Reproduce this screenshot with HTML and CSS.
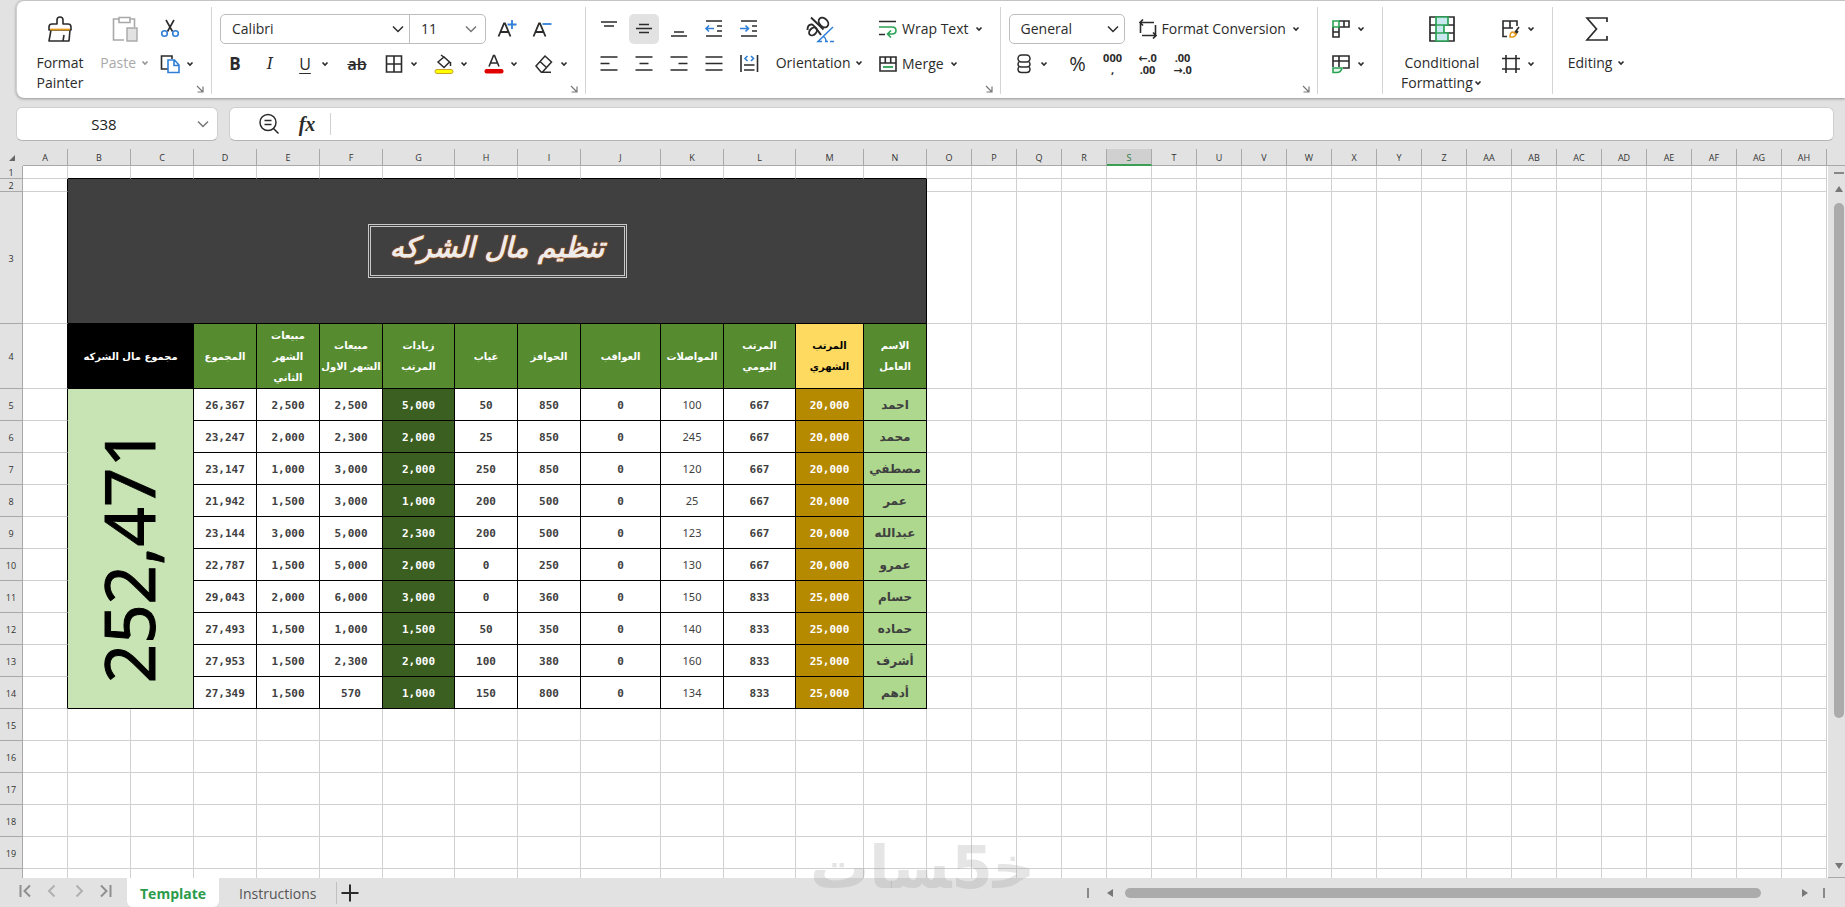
FILE: index.html
```html
<!DOCTYPE html>
<html lang="en">
<head>
    <meta charset="UTF-8">
    <meta name="viewport" content="width=device-width, initial-scale=1.0">
    <title>Template</title>
    <link rel="stylesheet" href="styles.css">
</head>
<body>

    <!-- shared icons -->
    <svg class="defs" aria-hidden="true">
        <symbol id="caret" viewBox="0 0 8 6"><path d="M1.500 1.500 4 4 6.500 1.500" fill="none" stroke="#2b2b2b" stroke-width="1.600"/></symbol>
        <symbol id="chevron" viewBox="0 0 12 8"><path d="M1 1.500 6 6.500 11 1.500" fill="none" stroke="currentColor" stroke-width="1.500"/></symbol>
        <symbol id="corner" viewBox="0 0 8 8"><path d="M1 1 6.500 6.500M7 1.500V7H1.500" fill="none" stroke="#777" stroke-width="1.200"/></symbol>
    </svg>

    <header class="ribbon">
        <div class="group">
            <div class="tools">
                <button class="big painter">
                    <svg width="28" height="28" viewBox="0 0 28 28"><path d="M11 9V5a3 3 0 0 1 6 0v4h5a3 3 0 0 1 3 3v3H3v-3a3 3 0 0 1 3-3zM5 15 3 26h20l1-11M18 20l-1 6" fill="none" stroke="#2b2b2b" stroke-width="1.600" stroke-linejoin="round"/><path d="M4 14.500h20" stroke="#e39a1c" stroke-width="1.800"/></svg>
                    <span>Format<br>Painter</span>
                </button>
                <button class="big paste" disabled>
                    <svg width="28" height="28" viewBox="0 0 28 28"><path d="M8 4H2.500v21H13M19 4h4.500v8M8 2.500h11v5H8z" fill="none" stroke="#a9a9a9" stroke-width="1.600"/><path d="M16 13h10v13H16z" fill="#e2e2e2" stroke="#a9a9a9" stroke-width="1.400"/></svg>
                    <span>Paste <svg class="caret"><use href="#caret"/></svg></span>
                </button>
                <div class="stack">
                    <div class="row">
                        <button class="icon" aria-label="Cut"><svg width="20" height="20" viewBox="0 0 20 20"><path d="M6 1 12.500 12.500M14 1 7.500 12.500" fill="none" stroke="#2b2b2b" stroke-width="1.600"/><g fill="none" stroke="#2f7fd8" stroke-width="1.600"><circle cx="4.500" cy="14.500" r="2.800"/><circle cx="15.500" cy="14.500" r="2.800"/></g></svg></button>
                    </div>
                    <div class="row">
                        <button class="split" aria-label="Copy"><span class="icon"><svg width="20" height="20" viewBox="0 0 20 20"><path d="M8 15H1.500V2H12v3" fill="none" stroke="#2b2b2b" stroke-width="1.600"/><path d="M8 6h6.500L19 11v7.500H8zM14 6v5.500h5" fill="#fff" stroke="#2f7fd8" stroke-width="1.600"/></svg></span><svg class="caret"><use href="#caret"/></svg></button>
                    </div>
                </div>
            </div>
            <button class="launcher" aria-label="Clipboard settings"><svg><use href="#corner"/></svg></button>
        </div>

        <div class="group">
            <div class="tools">
                <div class="stack">
                    <div class="row">
                        <div class="combo">
                            <label class="pick font-name"><select aria-label="Font"><option>Calibri</option></select><svg><use href="#chevron"/></svg></label>
                            <label class="pick font-size"><select aria-label="Font size"><option>11</option></select><svg><use href="#chevron"/></svg></label>
                        </div>
                        <button class="icon" aria-label="Increase font size"><svg width="20" height="20" viewBox="0 0 20 20"><path d="M1.500 17.500 7 4.500h1L13.500 17.500M3.500 13h8" fill="none" stroke="#2b2b2b" stroke-width="1.800"/><path d="M15 1v9M10.500 5.500h9" stroke="#2f7fd8" stroke-width="1.800"/></svg></button>
                        <button class="icon" aria-label="Decrease font size"><svg width="20" height="20" viewBox="0 0 20 20"><path d="M1.500 17.500 7 4.500h1L13.500 17.500M3.500 13h8" fill="none" stroke="#2b2b2b" stroke-width="1.800"/><path d="M10.500 5h9" stroke="#2f7fd8" stroke-width="1.800"/></svg></button>
                    </div>
                    <div class="row">
                        <button class="icon bold">B</button>
                        <button class="icon italic">I</button>
                        <button class="split"><span class="icon underline">U</span><svg class="caret"><use href="#caret"/></svg></button>
                        <button class="icon strike">ab</button>
                        <button class="split" aria-label="Borders"><span class="icon"><svg width="20" height="20" viewBox="0 0 20 20"><path d="M2.500 2h15v16h-15zM10 2v16M2.500 10h15" fill="none" stroke="#2b2b2b" stroke-width="1.600"/></svg></span><svg class="caret"><use href="#caret"/></svg></button>
                        <button class="split" aria-label="Fill color"><span class="icon"><svg width="20" height="20" viewBox="0 0 20 20"><path d="m4 8 6-5 5.500 5-5.500 5.500zM7 1l4 3M16.500 8v4" fill="none" stroke="#2b2b2b" stroke-width="1.500"/><rect x="1" y="15.500" width="18" height="4" rx="2" fill="#ff0" stroke="#c9a227"/></svg></span><svg class="caret"><use href="#caret"/></svg></button>
                        <button class="split" aria-label="Font color"><span class="icon"><svg width="20" height="20" viewBox="0 0 20 20"><path d="M5 12.500 9.500 1.500h1L15 12.500M6.500 9h7" fill="none" stroke="#2b2b2b" stroke-width="1.600"/><rect x="0.500" y="15" width="19" height="4.500" rx="2" fill="#e00000"/></svg></span><svg class="caret"><use href="#caret"/></svg></button>
                        <button class="split" aria-label="Clear"><span class="icon"><svg width="20" height="20" viewBox="0 0 20 20"><path d="m2 12 9-10 6.500 6-9 10H7zM6 7.500l6.500 6M7 18.300h10" fill="none" stroke="#2b2b2b" stroke-width="1.500"/></svg></span><svg class="caret"><use href="#caret"/></svg></button>
                    </div>
                </div>
            </div>
            <button class="launcher" aria-label="Font settings"><svg><use href="#corner"/></svg></button>
        </div>

        <div class="group">
            <div class="tools">
                <div class="stack">
                    <div class="row lines">
                        <button class="icon" aria-label="Top align"><svg width="20" height="20" viewBox="0 0 20 20"><path d="M2 3h16M5 7h10"/></svg></button>
                        <button class="icon active" aria-label="Middle align"><svg width="20" height="20" viewBox="0 0 20 20"><path d="M5 5.500h10M2 9.500h16M5 13.500h10"/></svg></button>
                        <button class="icon" aria-label="Bottom align"><svg width="20" height="20" viewBox="0 0 20 20"><path d="M5 13h10M2 17h16"/></svg></button>
                        <button class="icon" aria-label="Decrease indent"><svg width="20" height="20" viewBox="0 0 20 20"><path d="M2 2h16M13 7h5M13 12h5M2 17h16"/><path class="blue" d="M10 9.500H2M5 6.500l-3 3 3 3"/></svg></button>
                        <button class="icon" aria-label="Increase indent"><svg width="20" height="20" viewBox="0 0 20 20"><path d="M2 2h16M13 7h5M13 12h5M2 17h16"/><path class="blue" d="M1 9.500h8M6.500 6.500l3 3-3 3"/></svg></button>
                    </div>
                    <div class="row lines">
                        <button class="icon" aria-label="Align left"><svg width="20" height="20" viewBox="0 0 20 20"><path d="M1.500 3h17M1.500 9.500h9M1.500 16h17"/></svg></button>
                        <button class="icon" aria-label="Align center"><svg width="20" height="20" viewBox="0 0 20 20"><path d="M1.500 3h17M5.500 9.500h9M1.500 16h17"/></svg></button>
                        <button class="icon" aria-label="Align right"><svg width="20" height="20" viewBox="0 0 20 20"><path d="M1.500 3h17M9.500 9.500h9M1.500 16h17"/></svg></button>
                        <button class="icon" aria-label="Justify"><svg width="20" height="20" viewBox="0 0 20 20"><path d="M1.500 3h17M1.500 9.500h17M1.500 16h17"/></svg></button>
                        <button class="icon" aria-label="Distribute"><svg width="20" height="20" viewBox="0 0 20 20"><path d="M2 1v17M18.500 1v17M5 11h10.500M5 16h10.500"/><path class="blue" d="M8.500 2 6 4.500 8.500 7M12 2l2.500 2.500L12 7"/></svg></button>
                    </div>
                </div>
                <button class="big orientation">
                    <svg width="28" height="28" viewBox="0 0 28 28"><g fill="none" stroke="#2b2b2b" stroke-width="1.900"><ellipse cx="7" cy="16.500" rx="4.500" ry="3.200" transform="rotate(-45 7 16.500)"/><path d="M1.500 15q0-6 4.500-5.500 2 .5 9 10.500M5 2.500l12.500 12"/><ellipse cx="17.500" cy="7.500" rx="5.500" ry="4" transform="rotate(45 17.500 7.500)"/></g><path d="M27 12 12 26.500h4M17 21q3 2 3 5.500M19 26.500h3M24 26.500h4" fill="none" stroke="#2f7fd8" stroke-width="1.500"/></svg>
                    <span>Orientation <svg class="caret"><use href="#caret"/></svg></span>
                </button>
                <div class="stack">
                    <div class="row">
                        <button class="wide"><svg width="18" height="18" viewBox="0 0 18 18"><path d="M0 1.500h17M0 14.500h6" fill="none" stroke="#2b2b2b" stroke-width="1.600"/><path d="M0 7h13q4 0 4 3.500t-4 3.500H9M12 10.500 8.500 14l3.500 3.500" fill="none" stroke="#2aa355" stroke-width="1.600"/></svg>Wrap Text <svg class="caret"><use href="#caret"/></svg></button>
                    </div>
                    <div class="row">
                        <button class="wide"><svg width="18" height="18" viewBox="0 0 18 18"><path d="M1 2h16v14H1zM1 8h16M6.300 2v6M11.700 2v6" fill="none" stroke="#2b2b2b" stroke-width="1.600"/><path d="M4 12h10" stroke="#2aa355" stroke-width="1.800"/></svg>Merge <svg class="caret"><use href="#caret"/></svg></button>
                    </div>
                </div>
            </div>
            <button class="launcher" aria-label="Alignment settings"><svg><use href="#corner"/></svg></button>
        </div>

        <div class="group">
            <div class="tools">
                <div class="stack">
                    <div class="row">
                        <div class="combo">
                            <label class="pick number"><select aria-label="Number format"><option>General</option></select><svg><use href="#chevron"/></svg></label>
                        </div>
                        <button class="wide convert"><svg width="18" height="20" viewBox="0 0 18 20"><path d="M1.500 14V3.500H15M4 0.500 1 3.500l3 3M16.500 6v10.500H3M14 13.500l3 3-3 3" fill="none" stroke="#2b2b2b" stroke-width="1.600"/></svg>Format Conversion <svg class="caret"><use href="#caret"/></svg></button>
                    </div>
                    <div class="row">
                        <button class="split" aria-label="Currency"><span class="icon"><svg width="20" height="20" viewBox="0 0 20 20"><g fill="none" stroke="#2b2b2b" stroke-width="1.500"><rect x="4" y="1" width="12" height="7" rx="3.500"/><path d="M5.500 7.500Q4 8.500 4 10q0 3 3.500 3h5q3.500 0 3.500-3 0-1.500-1.500-2.500M5.500 12.500Q4 13.500 4 15q0 3.500 3.500 3.500h5Q16 18.500 16 15q0-1.500-1.500-2.500"/></g></svg></span><svg class="caret"><use href="#caret"/></svg></button>
                        <button class="icon percent">%</button>
                        <button class="icon digits">000<br>,</button>
                        <button class="icon digits">←.0<br>.00</button>
                        <button class="icon digits">.00<br>→.0</button>
                    </div>
                </div>
            </div>
            <button class="launcher" aria-label="Number settings"><svg><use href="#corner"/></svg></button>
        </div>

        <div class="group">
            <div class="tools">
                <div class="stack">
                    <div class="row">
                        <button class="split" aria-label="Rows and columns"><span class="icon"><svg width="20" height="20" viewBox="0 0 20 20"><path d="M8 2h10v6H8M13 2v6M2 8v10h6V8M2 13h6" fill="none" stroke="#2b2b2b" stroke-width="1.600"/><path d="M2 2h6v6H2z" fill="none" stroke="#2aa355" stroke-width="1.600"/></svg></span><svg class="caret"><use href="#caret"/></svg></button>
                    </div>
                    <div class="row">
                        <button class="split" aria-label="Worksheet"><span class="icon"><svg width="20" height="20" viewBox="0 0 20 20"><path d="M2 13V2h16v12h-6M2 7h16M8 2v11" fill="none" stroke="#2b2b2b" stroke-width="1.600"/><path d="M2 14h9q-1 4.500-5 4.500H2z" fill="#e3f6e9" stroke="#2aa355" stroke-width="1.600"/></svg></span><svg class="caret"><use href="#caret"/></svg></button>
                    </div>
                </div>
            </div>
        </div>

        <div class="group">
            <div class="tools">
                <button class="big conditional">
                    <svg width="28" height="28" viewBox="0 0 28 28"><path d="M2 2h24v24H2zM2 10h24M2 18h24" fill="none" stroke="#2b2b2b" stroke-width="1.700"/><path d="M8 2h12v8H8zM8 10h8v8H8zM8 18h12v8H8z" fill="#c9e8ef" stroke="#2aa355" stroke-width="1.700"/></svg>
                    <span>Conditional<br>Formatting<svg class="caret"><use href="#caret"/></svg></span>
                </button>
                <div class="stack">
                    <div class="row">
                        <button class="split" aria-label="Table style"><span class="icon"><svg width="20" height="20" viewBox="0 0 20 20"><path d="M6 17.500H2V2h14v5M2 9h10M9 2v7M18 8l-4.500 6M17 12l-2 3" fill="none" stroke="#2b2b2b" stroke-width="1.600"/><path d="M12 13q-3 0-3 5h3q3-1 3-3z" fill="#fff" stroke="#e39a1c" stroke-width="1.600"/></svg></span><svg class="caret"><use href="#caret"/></svg></button>
                    </div>
                    <div class="row">
                        <button class="split" aria-label="Cell format"><span class="icon"><svg width="20" height="20" viewBox="0 0 20 20"><path d="M1 4.500h18M1 15h18M5 1v18M15 1v18" fill="none" stroke="#2b2b2b" stroke-width="1.600"/></svg></span><svg class="caret"><use href="#caret"/></svg></button>
                    </div>
                </div>
            </div>
        </div>

        <div class="group">
            <div class="tools">
                <button class="big editing">
                    <svg width="28" height="28" viewBox="0 0 28 28"><path d="M24 7V3H4l9.500 11L4 25h20v-4" fill="none" stroke="#2b2b2b" stroke-width="1.700"/></svg>
                    <span>Editing <svg class="caret"><use href="#caret"/></svg></span>
                </button>
            </div>
        </div>
    </header>

    <div class="formula-bar">
        <div class="name-box">
            <input type="text" aria-label="Name box" value="S38">
            <svg><use href="#chevron"/></svg>
        </div>
        <div class="formula">
            <button class="icon" aria-label="Zoom formula"><svg width="22" height="22" viewBox="0 0 22 22"><path d="M15 15 20.500 20.500M6.500 7.500h7M6.500 11.500h7" stroke="#2b2b2b" stroke-width="1.500"/><circle cx="10" cy="9.500" r="8" fill="none" stroke="#2b2b2b" stroke-width="1.500"/></svg></button>
            <button class="icon fx">fx</button>
            <input type="text" aria-label="Formula">
        </div>
    </div>

    <main class="sheet">
        <div class="grid-area">
            <table id="grid"></table>
        </div>
        <div class="vscroll">
            <span class="dash"></span>
            <span class="arrow up"></span>
            <span class="track"><span class="thumb"></span></span>
            <span class="arrow down"></span>
        </div>
    </main>

    <footer class="tabs">
        <div class="nav">
            <button aria-label="First sheet"><svg width="12" height="14" viewBox="0 0 12 14"><path d="M1.500 1v12M11 1.500 5.500 7l5.500 5.500" stroke="#8f8f8f"/></svg></button>
            <button aria-label="Previous sheet"><svg width="12" height="14" viewBox="0 0 12 14"><path d="M8.500 1.500 3 7l5.500 5.500" stroke="#b0b0b0"/></svg></button>
            <button aria-label="Next sheet"><svg width="12" height="14" viewBox="0 0 12 14"><path d="M3.500 1.500 9 7l-5.500 5.500" stroke="#b0b0b0"/></svg></button>
            <button aria-label="Last sheet"><svg width="12" height="14" viewBox="0 0 12 14"><path d="M10.500 1v12M1 1.500 6.500 7 1 12.500" stroke="#8f8f8f"/></svg></button>
        </div>
        <button class="tab current">Template</button>
        <button class="tab">Instructions</button>
        <button class="add" aria-label="Add sheet"><svg width="18" height="18" viewBox="0 0 18 18"><path d="M9 0.500v17M0.500 9h17" stroke="#2b2b2b" stroke-width="2"/></svg></button>
        <div class="hscroll">
            <span class="bar"></span>
            <span class="arrow left"></span>
            <span class="track"><span class="thumb"></span></span>
            <span class="arrow right"></span>
            <span class="bar"></span>
        </div>
    </footer>

    <div class="watermark" dir="rtl">خ&zwj;5&zwj;سات</div>

    <script>
        const widths = [23, 45, 63, 63, 63, 63, 63, 72, 63, 63, 80, 63, 72, 68, 63];
        const heads = ['المجموع', 'مبيعات<br>الشهر<br>الثاني', 'مبيعات<br>الشهر الاول', 'زيادات<br>المرتب', 'غياب', 'الحوافز', 'العواقب', 'المواصلات', 'المرتب<br>اليومي', 'المرتب<br>الشهري', 'الاسم<br>العامل'];
        const kinds = ['', '', '', 'raise', '', '', '', 'plain', '', 'salary', 'name'];
        const data = [
            ['26,367', '2,500', '2,500', '5,000', '50', '850', '0', '100', '667', '20,000', 'احمد'],
            ['23,247', '2,000', '2,300', '2,000', '25', '850', '0', '245', '667', '20,000', 'محمد'],
            ['23,147', '1,000', '3,000', '2,000', '250', '850', '0', '120', '667', '20,000', 'مصطفي'],
            ['21,942', '1,500', '3,000', '1,000', '200', '500', '0', '25', '667', '20,000', 'عمر'],
            ['23,144', '3,000', '5,000', '2,300', '200', '500', '0', '123', '667', '20,000', 'عبدالله'],
            ['22,787', '1,500', '5,000', '2,000', '0', '250', '0', '130', '667', '20,000', 'عمرو'],
            ['29,043', '2,000', '6,000', '3,000', '0', '360', '0', '150', '833', '25,000', 'حسام'],
            ['27,493', '1,500', '1,000', '1,500', '50', '350', '0', '140', '833', '25,000', 'حماده'],
            ['27,953', '1,500', '2,300', '2,000', '100', '380', '0', '160', '833', '25,000', 'أشرف'],
            ['27,349', '1,500', '570', '1,000', '150', '800', '0', '134', '833', '25,000', 'أدهم']
        ];
        const total = 34;
        const extra = total - 14;

        function letter(i) {
            return i < 26 ? String.fromCharCode(65 + i) : 'A' + String.fromCharCode(39 + i);
        }
        function blanks(n) {
            return '<td></td>'.repeat(n);
        }

        let cols = '';
        for (let i = 0; i <= total; i++) {
            cols += `<col style="width:${widths[i] || 45}px">`;
        }
        let html = `<colgroup>${cols}</colgroup><thead><tr><th class="all"></th>`;
        for (let i = 0; i < total; i++) {
            html += `<th scope="col"${letter(i) === 'S' ? ' class="selected"' : ''}>${letter(i)}</th>`;
        }
        html += '</tr></thead><tbody>';

        for (let r = 1; r <= 20; r++) {
            const size = r < 3 ? 'slim' : r === 3 ? 'title-row' : r === 4 ? 'head-row' : 'data-row';
            // the last row only peeks out above the tabs
            html += `<tr class="${size}"><th scope="row">${r < 20 ? r : ''}</th>`;
            if (r === 1) {
                html += '<td></td>' + '<td class="above"></td>'.repeat(13) + blanks(extra);
            } else if (r === 2) {
                html += '<td class="edge"></td><td class="title" colspan="13" rowspan="2"><span dir="rtl">تنظيم مال الشركه</span></td>' + blanks(extra);
            } else if (r === 3) {
                html += '<td class="edge"></td>' + blanks(extra);
            } else if (r === 4) {
                html += '<td class="edge"></td><td class="sum-head" colspan="2" dir="rtl">مجموع مال الشركه</td>';
                html += heads.map((h, i) => `<td class="head ${kinds[i]}" dir="rtl">${h}</td>`).join('') + blanks(extra);
            } else if (r < 15) {
                html += '<td class="edge"></td>';
                if (r === 5) {
                    html += '<td class="sum" colspan="2" rowspan="10"><span>252,471</span></td>';
                }
                html += data[r - 5].map((v, i) => `<td class="cell ${kinds[i]}">${v}</td>`).join('') + blanks(extra);
            } else {
                html += blanks(total);
            }
            html += '</tr>';
        }
        document.getElementById('grid').innerHTML = html + '</tbody>';
    </script>
</body>
</html>
```
FILE: styles.css
```css
* {
    box-sizing: border-box;
}
body {
    margin: 0;
    height: 100vh;
    display: flex;
    flex-direction: column;
    overflow: hidden;
    background-color: #e2e2e2;
    font-family: "Open Sans", "Noto Sans", "DejaVu Sans", sans-serif;
    font-size: 14px;
    color: #2b2b2b;
}
button, input, select {
    font: inherit;
    color: inherit;
    background: none;
    border: none;
    padding: 0;
    margin: 0;
    outline: none;
}
.defs {
    display: none;
}

/* ribbon */
.ribbon {
    display: flex;
    flex: none;
    height: 98px;
    margin-left: 16px;
    padding-top: 10px;
    background-color: white;
    border-top: 1px solid #c4c4c4;
    border-left: 1px solid #d0d0d0;
    border-radius: 8px 0 0 8px;
    box-shadow: 0 1px 3px rgba(0, 0, 0, 0.35);
}
.group {
    display: grid;
    grid-template-rows: 70px 12px;
    padding: 0 8px;
    position: relative;
}
.group:not(:last-child)::after {
    content: "";
    position: absolute;
    top: -4px;
    bottom: 4px;
    right: 0;
    width: 1px;
    background-color: #d4d4d4;
}
.tools {
    grid-area: 1 / 1 / 3 / 2;
    display: flex;
    align-items: flex-start;
    padding-right: 9px;
}
.launcher {
    grid-area: 2 / 1;
    justify-self: end;
    align-self: end;
    width: 8px;
    height: 8px;
    display: flex;
}
.launcher svg {
    width: 8px;
    height: 8px;
}
.row {
    display: flex;
    align-items: center;
    gap: 5px;
    height: 35px;
}
.icon {
    display: flex;
    align-items: center;
    justify-content: center;
    flex: none;
    width: 30px;
    height: 30px;
    border-radius: 5px;
}
.split {
    display: flex;
    align-items: center;
    margin-right: 5px;
}
.row .split:last-child {
    margin-right: 0;
}
.caret {
    width: 8px;
    height: 6px;
    margin: 0 1px;
    vertical-align: 2px;
}
.big {
    display: flex;
    flex-direction: column;
    align-items: center;
    gap: 10px;
    padding-top: 4px;
    line-height: 20px;
    white-space: nowrap;
}
.painter {
    width: 70px;
}
.paste {
    width: 60px;
    color: #a9a9a9;
}
.paste .caret {
    opacity: 0.5;
}
.orientation {
    width: 90px;
    margin: 0 14px 0 11px;
}
.conditional {
    width: 96px;
    margin: 0 6px 0 3px;
}
.editing {
    width: 72px;
}
.wide {
    display: flex;
    align-items: center;
    gap: 5px;
    white-space: nowrap;
}
.convert {
    margin-left: 8px;
}
.combo {
    display: flex;
    height: 30px;
    margin-right: 1px;
    border: 1px solid #bdbdbd;
    border-radius: 5px;
}
.pick {
    display: grid;
    align-items: center;
}
.pick select, .pick svg {
    grid-area: 1 / 1;
}
.pick select {
    appearance: none;
    width: 100%;
    height: 100%;
    padding-left: 11px;
}
.pick svg {
    justify-self: end;
    width: 12px;
    height: 8px;
    margin-right: 5px;
    pointer-events: none;
}
.font-name {
    width: 189px;
    border-right: 1px solid #bdbdbd;
}
.font-size {
    width: 75px;
}
.font-size svg {
    margin-right: 8px;
    color: #777;
}
.number {
    width: 114px;
}
.bold {
    font-size: 17px;
    font-weight: 700;
}
.italic {
    font-family: "DejaVu Serif", serif;
    font-style: italic;
    font-size: 16px;
}
.underline {
    font-size: 16px;
    text-decoration: underline;
    text-underline-offset: 3px;
}
.strike {
    width: 34px;
    font-size: 16px;
    font-weight: 600;
    text-decoration: line-through;
}
.percent {
    font-size: 20px;
    margin-left: 4px;
}
.digits {
    font-size: 11px;
    font-weight: 700;
    line-height: 12px;
}
.lines svg {
    fill: none;
    stroke: #2b2b2b;
    stroke-width: 1.6;
}
.lines .blue {
    stroke: #2f7fd8;
}
.active {
    background-color: #e2e2e2;
}

/* formula bar */
.formula-bar {
    display: flex;
    flex: none;
    gap: 11px;
    margin: 9px 11px 8px 16px;
}
.name-box, .formula {
    display: flex;
    align-items: center;
    height: 34px;
    background-color: white;
    border: 1px solid #cfcfcf;
    border-bottom-color: #b5b5b5;
    border-radius: 6px;
}
.name-box {
    width: 202px;
    padding-right: 8px;
    color: #777;
}
.name-box input {
    flex: 1;
    min-width: 0;
    padding-right: 6px;
    font-size: 15px;
    text-align: center;
    color: #222;
}
.name-box svg {
    width: 12px;
    height: 8px;
}
.formula {
    flex: 1;
    gap: 8px;
    padding-left: 24px;
}
.formula input {
    flex: 1;
    height: 22px;
    border-left: 1px solid #d0d0d0;
    padding-left: 8px;
}
.fx {
    font-family: "Liberation Serif", serif;
    font-size: 20px;
    font-weight: 700;
    font-style: italic;
}

/* sheet */
.sheet {
    display: flex;
    flex: 1;
    min-height: 0;
}
.grid-area {
    flex: 1;
    min-width: 0;
    overflow: hidden;
    background: linear-gradient(#e2e2e2 16px, #a9a9a9 16px, #a9a9a9 17px, white 17px);
}
table {
    table-layout: fixed;
    width: 0;
    border-collapse: separate;
    border-spacing: 0;
}
th, td {
    padding: 0;
    text-align: center;
    vertical-align: middle;
    overflow: hidden;
    white-space: nowrap;
}
td {
    border-right: 1px solid #d0d0d0;
    border-bottom: 1px solid #d0d0d0;
}
th {
    background-color: #e2e2e2;
    border-right: 1px solid #a9a9a9;
    border-bottom: 1px solid #a9a9a9;
    padding-top: 2px;
    font-size: 9px;
    font-weight: 400;
    line-height: 10px;
    color: #333;
}
thead th {
    height: 17px;
}
.all {
    border-color: #e2e2e2;
}
.all::after {
    content: "";
    display: block;
    margin-left: 9px;
    border-left: 6px solid transparent;
    border-bottom: 6px solid #666;
    width: 0;
}
.selected {
    background-color: #d0d0d0;
    border-bottom: 2px solid #3a9f55;
    color: #2c7a40;
}
.slim {
    height: 13px;
}
.title-row {
    height: 132px;
}
.head-row {
    height: 65px;
}
.data-row {
    height: 32px;
}
.edge {
    border-right-color: black;
}
.above {
    border-bottom-color: black;
}
.title, .head, .sum-head, .sum, .cell {
    border-color: black;
}
.title {
    background-color: #404040;
}
.title span {
    display: inline-block;
    width: 259px;
    height: 54px;
    border: 3px double #c9c9c9;
    font-family: "DejaVu Sans", sans-serif;
    font-size: 28px;
    font-weight: 700;
    font-style: italic;
    line-height: 42px;
    color: #ececec;
    text-shadow: 0 0 2px #c55a11, 0 0 1px #c55a11;
}
.head, .sum-head {
    font-family: "DejaVu Sans", sans-serif;
    font-size: 10px;
    font-weight: 700;
    line-height: 21px;
    color: white;
    background-color: #568b2f;
}
.sum-head {
    background-color: black;
}
.head.salary {
    background-color: #ffda61;
    color: black;
}
.sum {
    padding: 18px 6px 0 0;
    background-color: #c9e4b4;
}
.sum span {
    display: inline-block;
    writing-mode: vertical-rl;
    transform: rotate(180deg);
    font-family: "Noto Sans", sans-serif;
    font-size: 69px;
    line-height: 80px;
    color: black;
    -webkit-text-stroke: 1px black;
}
.cell {
    padding-top: 1px;
    font-family: "DejaVu Sans Mono", monospace;
    font-size: 11px;
    font-weight: 700;
    color: #404040;
}
.cell.plain {
    padding-top: 0;
    font-family: "Noto Sans", sans-serif;
    font-weight: 400;
    line-height: 12px;
}
.cell.raise {
    background-color: #3b5e21;
    color: white;
}
.cell.salary {
    background-color: #b58900;
    color: white;
}
.cell.name {
    background-color: #add88d;
    font-family: "DejaVu Sans", sans-serif;
    font-size: 12px;
    line-height: 20px;
}

/* scrollbars */
.vscroll {
    display: flex;
    flex-direction: column;
    align-items: center;
    width: 17px;
    margin-top: 16px;
    padding: 6px 0 8px 4px;
    border-top: 1px solid #a9a9a9;
    border-bottom: 1px solid #a9a9a9;
}
.dash {
    width: 10px;
    height: 2px;
    background-color: #888;
}
.bar {
    width: 2px;
    height: 10px;
    background-color: #888;
}
.arrow {
    border: 4px solid transparent;
}
.arrow.up {
    margin: 8px 0 11px;
    border-bottom: 6px solid #777;
}
.arrow.down {
    border-top: 6px solid #777;
    border-bottom: 0;
}
.arrow.left {
    border-right: 6px solid #777;
    border-left: 0;
    margin: 0 12px 0 18px;
}
.arrow.right {
    border-left: 6px solid #777;
    border-right: 0;
    margin: 0 15px 0 0;
}
.track {
    flex: 1;
}
.thumb {
    display: block;
    background-color: #ababab;
    border-radius: 5px;
}
.vscroll .thumb {
    width: 10px;
    height: 78%;
}
.hscroll .thumb {
    width: 94%;
    height: 10px;
}
.hscroll {
    display: flex;
    align-items: center;
    width: 40%;
    margin: 0 20px 0 auto;
}

/* sheet tabs */
.tabs {
    display: flex;
    flex: none;
    height: 29px;
}
.nav {
    display: flex;
    gap: 15px;
    width: 127px;
    padding-left: 19px;
}
.nav path {
    fill: none;
    stroke-width: 2;
}
.tab {
    padding: 2px 20px 0;
    color: #555;
}
.tab.current {
    padding: 2px 13px 0;
    background-color: white;
    border-radius: 0 0 6px 6px;
    color: #2b9b4b;
    font-weight: 700;
}
.add {
    display: flex;
    align-items: center;
    height: 22px;
    margin-top: 4px;
    padding-left: 4px;
    border-left: 1px solid #c0c0c0;
}
.watermark {
    position: absolute;
    left: 0;
    right: 0;
    bottom: 4px;
    text-align: center;
    font-family: "DejaVu Sans", sans-serif;
    font-size: 59px;
    font-weight: 700;
    line-height: 70px;
    color: rgba(150, 150, 150, 0.25);
    pointer-events: none;
}
```
